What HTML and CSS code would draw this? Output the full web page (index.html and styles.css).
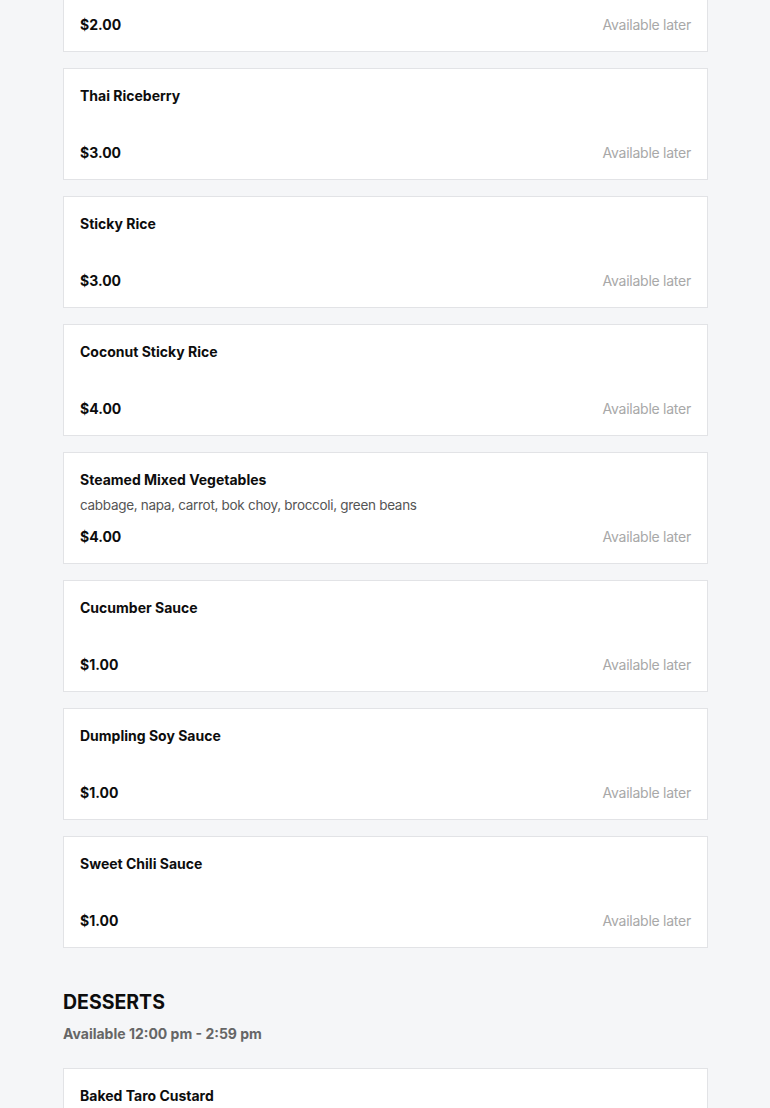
FILE: index.html
```html
<!DOCTYPE html>
<html>
<head>
<meta charset="utf-8">
<link rel="stylesheet" href="styles.css">
</head>
<body>
<main class="menu">
  <section class="section section-first">
    <div class="items">
      <div class="item"><div class="name">Jasmine Rice</div><div class="desc"></div><div class="row"><span class="price">$2.00</span><span class="status">Available later</span></div></div>
      <div class="item"><div class="name">Thai Riceberry</div><div class="desc"></div><div class="row"><span class="price">$3.00</span><span class="status">Available later</span></div></div>
      <div class="item"><div class="name">Sticky Rice</div><div class="desc"></div><div class="row"><span class="price">$3.00</span><span class="status">Available later</span></div></div>
      <div class="item"><div class="name">Coconut Sticky Rice</div><div class="desc"></div><div class="row"><span class="price">$4.00</span><span class="status">Available later</span></div></div>
      <div class="item"><div class="name">Steamed Mixed Vegetables</div><div class="desc">cabbage, napa, carrot, bok choy, broccoli, green beans</div><div class="row"><span class="price">$4.00</span><span class="status">Available later</span></div></div>
      <div class="item"><div class="name">Cucumber Sauce</div><div class="desc"></div><div class="row"><span class="price">$1.00</span><span class="status">Available later</span></div></div>
      <div class="item"><div class="name">Dumpling Soy Sauce</div><div class="desc"></div><div class="row"><span class="price">$1.00</span><span class="status">Available later</span></div></div>
      <div class="item"><div class="name">Sweet Chili Sauce</div><div class="desc"></div><div class="row"><span class="price">$1.00</span><span class="status">Available later</span></div></div>
    </div>
  </section>
  <section class="section">
    <h2 class="section-title">DESSERTS</h2>
    <p class="section-hours">Available 12:00 pm - 2:59 pm</p>
    <div class="items">
      <div class="item"><div class="name">Baked Taro Custard</div><div class="desc"></div><div class="row"><span class="price">$4.00</span><span class="status">Available later</span></div></div>
    </div>
  </section>
</main>
</body>
</html>
```
FILE: styles.css
```css
html, body {
  margin: 0;
  padding: 0;
  background: #f5f6f8;
  font-family: "Inter", "Roboto", "Liberation Sans", sans-serif;
  color: #111;
}
.menu {
  width: 645px;
  margin: 0 auto 0 63px;
}
.section-first {
  margin-top: -60px;
}
.items {
  display: flex;
  flex-direction: column;
  gap: 16px;
}
.item {
  background: #fff;
  border: 1px solid #e2e3e6;
  padding: 17px 16px 16px;
}
.name {
  font-size: 14px;
  font-weight: 700;
  line-height: 20px;
  color: #0d0d0d;
}
.desc {
  margin-top: 5px;
  min-height: 20px;
  font-size: 13.5px;
  line-height: 20px;
  color: #555;
  letter-spacing: -0.3px;
}
.row {
  margin-top: 12px;
  display: flex;
  justify-content: space-between;
  align-items: center;
  line-height: 20px;
}
.price {
  font-size: 14px;
  font-weight: 700;
  color: #0d0d0d;
}
.status {
  font-size: 14px;
  letter-spacing: -0.25px;
  color: #a8a8a8;
}
.section-title {
  margin: 40px 0 0;
  font-size: 19.5px;
  line-height: 28px;
  font-weight: 700;
  color: #0d0d0d;
}
.section-hours {
  margin: 8px 0 24px;
  font-size: 14px;
  line-height: 20px;
  font-weight: 700;
  color: #666;
}
```
